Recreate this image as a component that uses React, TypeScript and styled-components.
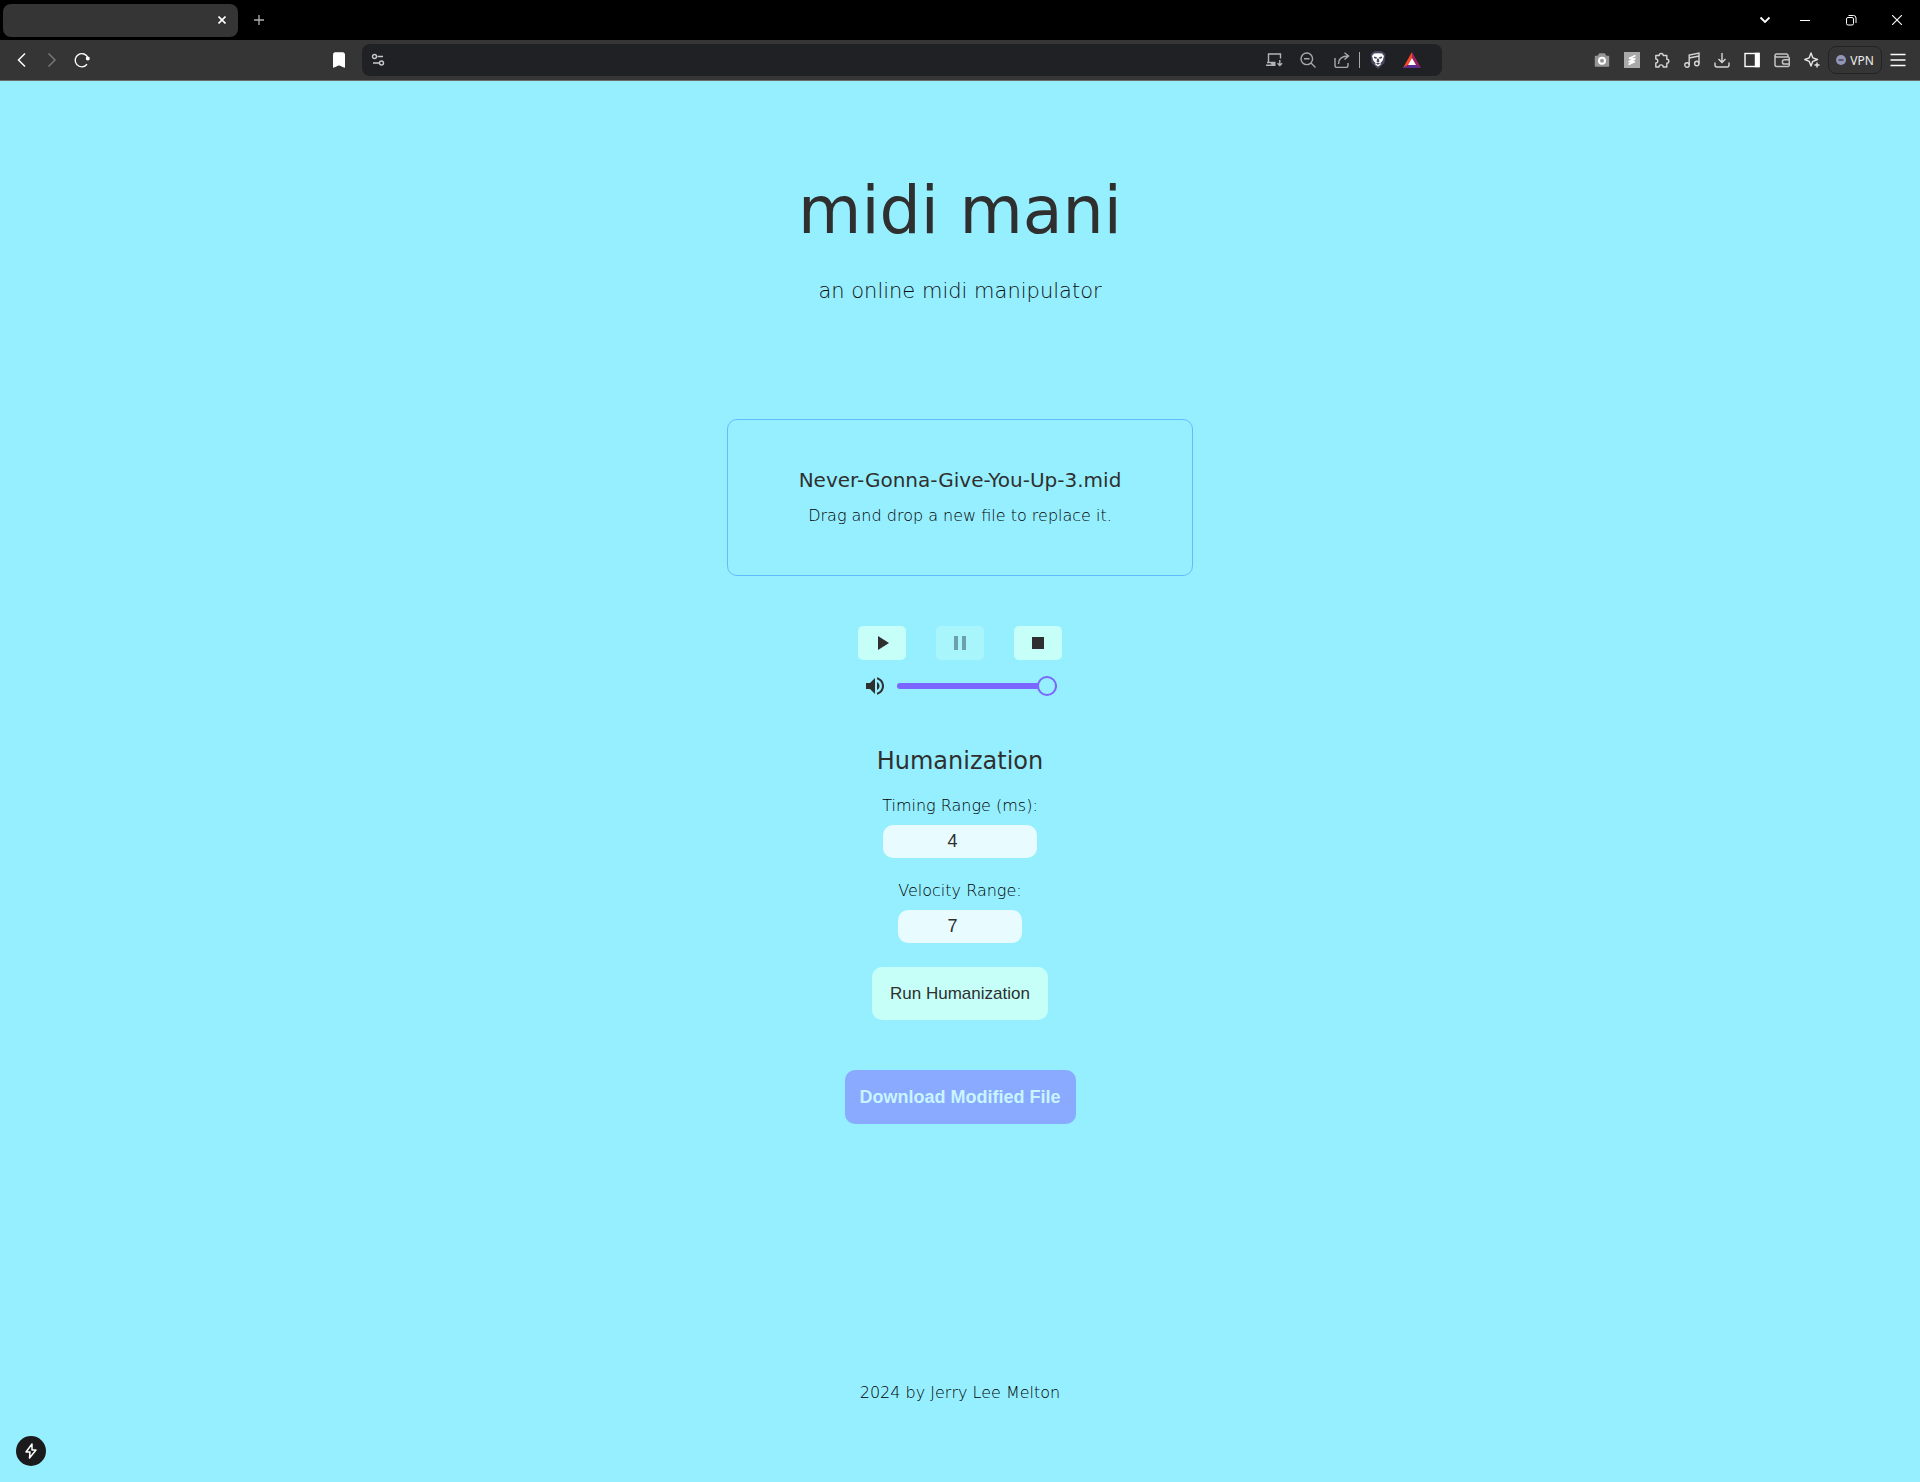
import React, { useState } from "react";
import styled, { createGlobalStyle } from "styled-components";

const GlobalStyle = createGlobalStyle`
  *, *::before, *::after { box-sizing: border-box; }
  body {
    margin: 0;
    background: #96efff;
    color: #2f2f2f;
    font-family: "DejaVu Sans", Lato, sans-serif;
    font-weight: 400;
  }
  button { font: inherit; border: 0; padding: 0; margin: 0; cursor: pointer; }
`;

const Window = styled.div`
  display: flex;
  flex-direction: column;
  min-height: 100vh;
`;

const TabStrip = styled.div`
  display: flex;
  align-items: center;
  height: 40px;
  padding-left: 3px;
  background: #000;
  color: #fff;
`;

const Tab = styled.div`
  display: flex;
  align-items: center;
  justify-content: flex-end;
  width: 235px;
  height: 33px;
  padding-right: 1px;
  border-radius: 8px;
  background: #353535;
`;

const Spacer = styled.div`
  flex: 1;
`;

const IconButton = styled.button<{ $w?: number; $color?: string }>`
  display: inline-flex;
  align-items: center;
  justify-content: center;
  flex: none;
  width: ${(p) => p.$w ?? 30}px;
  height: 32px;
  background: transparent;
  color: ${(p) => p.$color ?? "#fff"};
`;

const Toolbar = styled.div`
  display: grid;
  grid-template-columns: 362px minmax(0, 1080px) minmax(340px, 1fr);
  align-items: center;
  height: 41px;
  background: #353535;
  border-bottom: 1px solid #6a6a6a;
`;

const NavGroup = styled.div`
  display: flex;
  align-items: center;
  padding: 0 8px 0 7px;
`;

const AddressBar = styled.div`
  display: flex;
  align-items: center;
  height: 32px;
  padding: 0 14px 0 1px;
  border-radius: 8px;
  background: #202124;
`;

const AddressInput = styled.input`
  flex: 1;
  min-width: 0;
  height: 24px;
  border: 0;
  outline: 0;
  background: transparent;
  color: #fff;
`;

const Divider = styled.span`
  width: 1px;
  height: 16px;
  background: #a8a8a8;
`;

const Extensions = styled.div`
  display: flex;
  align-items: center;
  justify-content: flex-end;
  padding-right: 7px;
`;

const VpnButton = styled.button`
  display: flex;
  align-items: center;
  justify-content: center;
  gap: 4px;
  width: 54px;
  height: 28px;
  margin: 0 1px;
  border: 1px solid #232323;
  border-radius: 8px;
  background: transparent;
  color: #eee;
  font-family: "Noto Sans", sans-serif;
  font-size: 12px;
`;

const Page = styled.div`
  display: flex;
  flex: 1;
  flex-direction: column;
  align-items: center;
  padding: 90px 16px 77px;
`;

const Title = styled.h1`
  margin: 0;
  font-size: 65px;
  line-height: 80px;
  font-weight: 400;
`;

const Tagline = styled.p`
  margin: 26px 0 0;
  color: #101010;
  font-size: 21px;
  line-height: 28px;
  font-weight: 200;
`;

const DropZone = styled.section`
  display: flex;
  flex-direction: column;
  align-items: center;
  justify-content: center;
  gap: 10px;
  width: 466px;
  max-width: 100%;
  min-height: 157px;
  margin-top: 114px;
  padding-bottom: 2px;
  border: 1px solid #5fbdff;
  border-radius: 10px;
`;

const FileName = styled.p`
  margin: 0;
  font-size: 20px;
  line-height: 28px;
`;

const Note = styled.p`
  margin: 0;
  color: #000;
  font-size: 16px;
  line-height: 24px;
  font-weight: 200;
`;

const Transport = styled.div`
  display: flex;
  gap: 30px;
  margin-top: 50px;
`;

const TransportButton = styled.button`
  display: flex;
  align-items: center;
  justify-content: center;
  width: 48px;
  height: 34px;
  border-radius: 5px;
  background: #c5fff8;
  color: #2f2f2f;
  &:disabled { opacity: 0.4; }
`;

const Volume = styled.label`
  display: flex;
  align-items: center;
  gap: 10px;
  height: 24px;
  margin-top: 14px;
`;

const VolumeSlider = styled.input`
  appearance: none;
  width: 160px;
  height: 6px;
  margin: 0;
  border-radius: 3px;
  background: #7b66ff;
  &::-webkit-slider-thumb {
    appearance: none;
    width: 20px;
    height: 20px;
    border: 2px solid #7b66ff;
    border-radius: 50%;
    background: #96efff;
  }
`;

const Form = styled.form`
  display: flex;
  flex-direction: column;
  align-items: center;
`;

const FormTitle = styled.h2`
  margin: 47px 0 0;
  font-size: 24px;
  line-height: 32px;
  font-weight: 400;
`;

const Field = styled.div`
  display: flex;
  flex-direction: column;
  align-items: center;
  gap: 7px;
  margin-top: 17px;
  & + & { margin-top: 21px; }
`;

const FieldLabel = styled.label`
  color: #000;
  font-size: 16px;
  line-height: 24px;
  font-weight: 200;
`;

const NumberInput = styled.input<{ $w: number }>`
  width: ${(p) => p.$w}px;
  height: 33px;
  padding: 0 5px;
  border: 0;
  border-radius: 10px;
  background: #e8fbff;
  color: #2f2f2f;
  font-family: "Liberation Sans", Arial, sans-serif;
  font-size: 18px;
  text-align: center;
`;

const ActionButton = styled.button<{ $primary?: boolean }>`
  min-height: ${(p) => (p.$primary ? 54 : 53)}px;
  margin-top: ${(p) => (p.$primary ? 50 : 24)}px;
  padding: 0 ${(p) => (p.$primary ? 15 : 18)}px;
  border-radius: 10px;
  background: ${(p) => (p.$primary ? "#89aaff" : "#c5fff8")};
  color: ${(p) => (p.$primary ? "#c8f5ff" : "#2f2f2f")};
  font-family: "Liberation Sans", Arial, sans-serif;
  font-size: ${(p) => (p.$primary ? 18 : 17)}px;
  font-weight: ${(p) => (p.$primary ? 700 : 400)};
`;

const Footer = styled.footer`
  margin-top: auto;
  padding-top: 64px;
  color: #000;
  font-size: 16px;
  line-height: 24px;
  font-weight: 200;
`;

const DevBadge = styled.button`
  position: fixed;
  left: 16px;
  bottom: 16px;
  display: flex;
  align-items: center;
  justify-content: center;
  width: 30px;
  height: 30px;
  border-radius: 50%;
  background: #1b1b1d;
  color: #fff;
`;

type IconProps = { size?: number; sw?: number; children: React.ReactNode };
const Line = ({ size = 16, sw = 1.4, children }: IconProps) => (
  <svg width={size} height={size} viewBox={`0 0 ${size} ${size}`} fill="none" stroke="currentColor" strokeWidth={sw} aria-hidden="true">
    {children}
  </svg>
);
const Solid = ({ d }: { d: string }) => (
  <svg width="24" height="24" viewBox="0 0 24 24" fill="currentColor" aria-hidden="true">
    <path d={d} />
  </svg>
);

function BrowserChrome() {
  return (
    <header>
      <TabStrip>
        <Tab>
          <IconButton aria-label="Close tab"><Line size={8} sw={1.6}><path d="M.5.5l7 7M7.500.5l-7 7" /></Line></IconButton>
        </Tab>
        <IconButton $w={42} $color="#b0b0b0" aria-label="New tab"><Line size={12} sw={1.3}><path d="M6 1v10M1 6h10" /></Line></IconButton>
        <Spacer />
        <IconButton $w={34} aria-label="Search tabs"><Line size={12} sw={1.8}><path d="M1.500 3.500L6 8l4.500-4.500" /></Line></IconButton>
        <IconButton $w={46} aria-label="Minimise"><Line size={10} sw={1}><path d="M0 5.500h10" /></Line></IconButton>
        <IconButton $w={46} aria-label="Restore"><Line size={12} sw={1}><rect x="1.500" y="3.500" width="7" height="7.500" rx="1.500" /><path d="M3.500 1.500h5A2.500 2.500 0 0 1 11 4v5" /></Line></IconButton>
        <IconButton $w={46} aria-label="Close window"><Line size={10} sw={1.1}><path d="M0 0l10 10M10 0L0 10" /></Line></IconButton>
      </TabStrip>
      <Toolbar>
        <NavGroup>
          <IconButton aria-label="Back"><Line sw={1.5}><path d="M11 1.500L4.500 8l6.500 6.500" /></Line></IconButton>
          <IconButton $color="#7c7c7c" aria-label="Forward"><Line sw={1.4}><path d="M4.500 1.500L11 8l-6.500 6.500" /></Line></IconButton>
          <IconButton aria-label="Reload">
            <Line sw={1.4}><path d="M14 6A6.600 6.600 0 1 0 13 12.300" /><circle cx="13.800" cy="6.500" r="1.300" fill="currentColor" /></Line>
          </IconButton>
          <Spacer />
          <IconButton aria-label="Bookmark"><Line sw={1}><path d="M4 .8h8a1.500 1.500 0 0 1 1.500 1.500v13L8 12.800l-5.500 2.500v-13A1.500 1.500 0 0 1 4 .8z" fill="currentColor" strokeLinejoin="round" /></Line></IconButton>
        </NavGroup>
        <AddressBar>
          <IconButton $color="#c8c8c8" aria-label="Site settings">
            <Line size={14} sw={1.4}><circle cx="3.500" cy="3.500" r="2" /><circle cx="10.500" cy="10" r="2" /><path d="M6.500 3.500H12M2 10h6" /></Line>
          </IconButton>
          <AddressInput aria-label="Address" />
          <IconButton $w={34} $color="#b4b4b4" aria-label="Install">
            <Line size={18}><path d="M15.500 7.500V3h-12v8.500h7M1 14.200h9.500M2 11.500h4l1 1.300h3.500M14.800 9v5.500M12.500 12.300l2.300 2.300 2.300-2.300" /></Line>
          </IconButton>
          <IconButton $w={34} $color="#a8a8a8" aria-label="Zoom"><Line><circle cx="6.800" cy="6.800" r="5.800" /><path d="M4 6.800h5.500M11 11l4.500 4.500" /></Line></IconButton>
          <IconButton $w={34} $color="#a8a8a8" aria-label="Share"><Line><path d="M1 6v7.500a2 2 0 0 0 2 2h9a2 2 0 0 0 2-2V11M4.500 12C4.500 7 7.500 4 14.500 4M10.500.8L14.600 4 10.500 7.500" /></Line></IconButton>
          <Divider />
          <IconButton $w={36} aria-label="Shields">
            <svg width="16" height="18" viewBox="0 0 16 18" aria-hidden="true">
              <path d="M3 1l2-1h6l2 1 2.500 2-1 9L8 18l-6.500-6L.5 3z" fill="#484860" />
              <path d="M4 2.500l4-.3 4 .3L14 5l-1.300 4.500-2.200 2.500.3 1.500L8 15.500l-2.800-2 .3-1.500L3.300 9.500 2 5z" fill="#fff" />
              <path d="M4 5.500l3 .8-.7 1.700L4 7zM12 5.500l-3 .8.700 1.700L12 7zM7.300 7.500h1.400l.8 3L8 11.500l-1.500-1zM5.800 12.500L8 11.800l2.200.7L8 13.800z" fill="#484860" />
            </svg>
          </IconButton>
          <IconButton $w={32} aria-label="Rewards">
            <svg width="18" height="16" viewBox="0 0 18 16" aria-hidden="true">
              <path d="M9 0L0 16l5-3 4-7z" fill="#ff4724" />
              <path d="M9 0l9 16-5-3-4-7z" fill="#9e1f63" />
              <path d="M0 16h18l-5-3H5z" fill="#5b2d90" />
              <path d="M9 6l4 7H5z" fill="#fff" />
            </svg>
          </IconButton>
        </AddressBar>
        <Extensions>
          <IconButton $color="#969696" aria-label="Screenshot">
            <Line><path d="M1.500 4.500H4L5.500 2h5L12 4.500h2.500V14h-13z" fill="currentColor" strokeLinejoin="round" /><circle cx="8" cy="8.800" r="3" stroke="#fff" strokeWidth="2" /></Line>
          </IconButton>
          <IconButton aria-label="Scripts">
            <svg width="16" height="16" viewBox="0 0 16 16" aria-hidden="true"><path d="M0 0h16v16H0z" fill="#a9a9a9" /><path d="M11.500 3.500l-6.500 3M11.500 6.500l-7 3.500M11 9.500l-6.500 3M5 6.500l6 .500M5 9.500l6 .200" fill="none" stroke="#fff" strokeWidth="1.700" /></svg>
          </IconButton>
          <IconButton $color="#d6d6d6" aria-label="Extensions">
            <Line><path d="M1.800 3.500h3.400a2 2 0 1 1 4 0h3.600v3.700a2 2 0 1 1 0 4v3.800H9.200a2.100 2.100 0 0 0-4.200 0H1.800v-4a2 2 0 0 0 0-4z" strokeLinejoin="round" /></Line>
          </IconButton>
          <IconButton $color="#d6d6d6" aria-label="Playlist"><Line><circle cx="3" cy="13" r="2.200" /><circle cx="12.800" cy="11.500" r="2.200" /><path d="M5.200 13V3L15 1v10.500M5.200 6L15 4" /></Line></IconButton>
          <IconButton $color="#d6d6d6" aria-label="Downloads"><Line><path d="M8 1v9.500M4.500 7L8 10.500 11.500 7M1 10.500V13a2 2 0 0 0 2 2h10a2 2 0 0 0 2-2v-2.500" /></Line></IconButton>
          <IconButton aria-label="Sidebar"><Line><rect x="1" y="1.500" width="14" height="13" /><path d="M11.500 1.500H15v13h-3.500z" fill="currentColor" /></Line></IconButton>
          <IconButton $color="#c4c4c4" aria-label="Wallet"><Line sw={1.500}><path d="M14 5V3.500A1.500 1.500 0 0 0 12.500 2h-10a1.500 1.500 0 0 0 0 3H14a1.500 1.500 0 0 1 1.300 1.500V13a1.500 1.500 0 0 1-1.500 1.500h-11.300A1.500 1.500 0 0 1 1 13V3.500M15 7.800h-4.500a2 2 0 0 0 0 4.200H15" /></Line></IconButton>
          <IconButton $color="#e6e6e6" aria-label="Assistant"><Line><path d="M7 1l1.800 4.800L13.500 7.500l-4.700 1.800L7 14 5.200 9.300.8 7.500l4.400-1.700zM13 10.500v5M10.500 13h5" strokeLinejoin="round" /></Line></IconButton>
          <VpnButton>
            <svg width="10" height="10" viewBox="0 0 10 10" aria-hidden="true"><circle cx="5" cy="5" r="5" fill="#9496b8" /><path d="M2.500 5h5" stroke="#35354a" strokeWidth="1.300" /></svg>
            VPN
          </VpnButton>
          <IconButton aria-label="Menu"><Line sw={1.3}><path d="M.5 2.500h15M.5 8h15M.5 13.500h15" /></Line></IconButton>
        </Extensions>
      </Toolbar>
    </header>
  );
}

export default function App() {
  const [volume, setVolume] = useState(100);
  const [timing, setTiming] = useState("4");
  const [velocity, setVelocity] = useState("7");

  return (
    <Window>
      <GlobalStyle />
      <BrowserChrome />
      <Page>
        <Title>midi mani</Title>
        <Tagline>an online midi manipulator</Tagline>
        <DropZone>
          <FileName>Never-Gonna-Give-You-Up-3.mid</FileName>
          <Note>Drag and drop a new file to replace it.</Note>
        </DropZone>
        <Transport>
          <TransportButton aria-label="Play"><Solid d="M8 5v14l11-7z" /></TransportButton>
          <TransportButton aria-label="Pause" disabled><Solid d="M6 19h4V5H6v14zm8-14v14h4V5h-4z" /></TransportButton>
          <TransportButton aria-label="Stop"><Solid d="M6 6h12v12H6z" /></TransportButton>
        </Transport>
        <Volume>
          <Solid d="M3 9v6h4l5 5V4L7 9H3zm13.500 3c0-1.770-1.020-3.290-2.500-4.030v8.050c1.480-.730 2.500-2.250 2.500-4.020zM14 3.230v2.060c2.890.860 5 3.540 5 6.710s-2.110 5.850-5 6.710v2.060c4.010-.910 7-4.490 7-8.770s-2.990-7.860-7-8.770z" />
          <VolumeSlider type="range" aria-label="Volume" min={0} max={100} value={volume} onChange={(e) => setVolume(Number(e.target.value))} />
        </Volume>
        <Form onSubmit={(e) => e.preventDefault()}>
          <FormTitle>Humanization</FormTitle>
          <Field>
            <FieldLabel htmlFor="timing">Timing Range (ms):</FieldLabel>
            <NumberInput id="timing" type="number" $w={154} value={timing} onChange={(e) => setTiming(e.target.value)} />
          </Field>
          <Field>
            <FieldLabel htmlFor="velocity">Velocity Range:</FieldLabel>
            <NumberInput id="velocity" type="number" $w={124} value={velocity} onChange={(e) => setVelocity(e.target.value)} />
          </Field>
          <ActionButton type="submit">Run Humanization</ActionButton>
        </Form>
        <ActionButton $primary>Download Modified File</ActionButton>
        <Footer>2024 by Jerry Lee Melton</Footer>
      </Page>
      <DevBadge aria-label="Developer tools">
        <Line size={16} sw={1.500}><path d="M9 1L3 9h4l-.5 6L13 7H9z" strokeLinejoin="round" /></Line>
      </DevBadge>
    </Window>
  );
}
